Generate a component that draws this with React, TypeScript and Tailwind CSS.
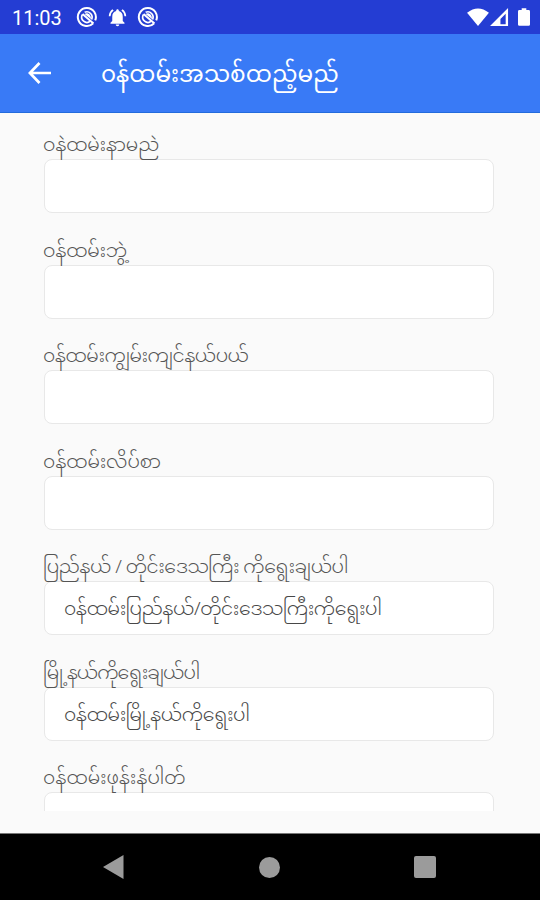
type Field = {
  label: string;
  tracking: string;
  placeholder?: string;
};

const fields: Field[] = [
  { label: 'ဝနဲထမဲးနာမညဲ', tracking: 'tracking-[-0.2px]' },
  { label: 'ဝန်ထမ်းဘွဲ့', tracking: 'tracking-[-0.2px]' },
  { label: '၀န်ထမ်းကျွမ်းကျင်နယ်ပယ်', tracking: 'tracking-[-0.5px]' },
  { label: '၀န်ထမ်းလိပ်စာ', tracking: 'tracking-[-0.1px]' },
  {
    label: 'ပြည်နယ် / တိုင်းဒေသကြီး ကိုရွေးချယ်ပါ',
    tracking: 'tracking-[-0.5px]',
    placeholder: '၀န်ထမ်းပြည်နယ်/တိုင်းဒေသကြီးကိုရွေးပါ',
  },
  {
    label: 'မြို့နယ်ကိုရွေးချယ်ပါ',
    tracking: 'tracking-[-1px]',
    placeholder: '၀န်ထမ်းမြို့နယ်ကိုရွေးပါ',
  },
  { label: '၀န်ထမ်းဖုန်းနံပါတ်', tracking: 'tracking-normal' },
];

function RadarIcon() {
  return (
    <svg width="22" height="22" viewBox="0 0 22 22" fill="none" stroke="currentColor">
      <path d="M17 17.6A9 9 0 1 1 19.2 14.4" strokeWidth="2" />
      <path d="M14.3 15.2A5.3 5.3 0 0 1 6.3 8.6M8.6 6.3A5.3 5.3 0 0 1 15.5 13.5" strokeWidth="1.7" />
      <path d="M8.5 8C11 6 15 8 15 13Z" fill="currentColor" stroke="none" />
      <path d="M6.5 8l11 9.5" strokeWidth="2" />
    </svg>
  );
}

function BellIcon() {
  return (
    <svg width="21" height="21" viewBox="0 0 24 24" fill="currentColor">
      <path d="M7.58 4.08 6.15 2.65C3.75 4.48 2.17 7.3 2.03 10.5h2a8.45 8.45 0 0 1 3.55-6.42zm12.39 6.42h2c-.15-3.2-1.73-6.02-4.12-7.85l-1.42 1.43a8.495 8.495 0 0 1 3.54 6.42zM18 11c0-3.07-1.64-5.64-4.5-6.32V4c0-.83-.67-1.5-1.5-1.5s-1.5.67-1.5 1.5v.68C7.63 5.36 6 7.92 6 11v5l-2 2v1h16v-1l-2-2zm-6 11c1.1 0 2-.9 2-2h-4c0 1.1.9 2 2 2z" />
    </svg>
  );
}

function StatusBar() {
  return (
    <div className="flex h-[34px] items-center bg-[#243dd3] pl-3 pr-[10px] text-white">
      <span className="w-[64px] pt-[2px] font-[Roboto,sans-serif] text-[20px] leading-6">11:03</span>
      <div className="flex items-center gap-[9px]">
        <RadarIcon />
        <BellIcon />
        <RadarIcon />
      </div>
      <div className="ml-auto flex items-center">
        <svg width="22" height="19" viewBox="0 0 23 20" fill="currentColor">
          <path d="M0 5Q11.5-4 23 5L11.5 19Z" />
        </svg>
        <svg className="ml-px" width="19" height="19" viewBox="0 0 20 20" fill="currentColor">
          <path fillRule="evenodd" d="M0 19 19 0V19ZM11 11.5V17H16.5V6Z" />
        </svg>
        <svg className="ml-[9px]" width="12" height="19" viewBox="0 0 13 20" fill="currentColor">
          <path d="M4 0h5v2h2.5Q13 2 13 3.5v14Q13 19 11.5 19h-10Q0 19 0 17.5v-14Q0 2 1.5 2H4Z" />
        </svg>
      </div>
    </div>
  );
}

function FormField({ label, tracking, placeholder }: Field) {
  return (
    <div className="mb-[15.5px] h-[90px] shrink-0">
      <div className={`h-9 whitespace-nowrap pt-[6px] text-[19px] font-light leading-9 text-[#555] ${tracking}`}>
        {label}
      </div>
      <div className="ml-px flex h-[54px] items-center rounded-lg border border-[#e8e8e8] bg-white pl-[19px]">
        <span className="whitespace-nowrap pt-[6px] text-[19px] font-light leading-9 tracking-[-0.4px] text-[#484848]">
          {placeholder}
        </span>
      </div>
    </div>
  );
}

export default function App() {
  return (
    <div className="flex h-[900px] w-[540px] flex-col overflow-hidden bg-[#fafafa] font-['Noto_Sans_Myanmar','Noto_Sans',sans-serif]">
      <StatusBar />

      <header className="flex h-[79px] items-center border-b border-[#236bdc] bg-[#397af6] text-white">
        <svg className="ml-7 mr-[49px]" width="24" height="22" viewBox="0 0 24 22" fill="none" stroke="currentColor" strokeWidth="2.7">
          <path d="M23 11H2.5M11.5 1 1.9 11l9.6 10" />
        </svg>
        <h1 className="whitespace-nowrap pt-[7px] text-[23.2px] leading-9">၀န်ထမ်းအသစ်ထည့်မည်</h1>
      </header>

      <main className="flex h-[698px] flex-col overflow-hidden pl-[43px] pr-[46px] pt-[10px]">
        {fields.map((field) => (
          <FormField key={field.label} {...field} />
        ))}
      </main>

      <nav className="mt-auto flex h-[67px] items-center justify-between border-t border-[#777] bg-black pl-[103px] pr-[104px] text-[#9b9b9b]">
        <svg width="21" height="24" viewBox="0 0 21 24" fill="currentColor">
          <path d="M0 12 20.5 0v24Z" />
        </svg>
        <div className="size-[21px] rounded-full bg-current" />
        <div className="size-[22px] rounded-[2px] bg-current" />
      </nav>
    </div>
  );
}
